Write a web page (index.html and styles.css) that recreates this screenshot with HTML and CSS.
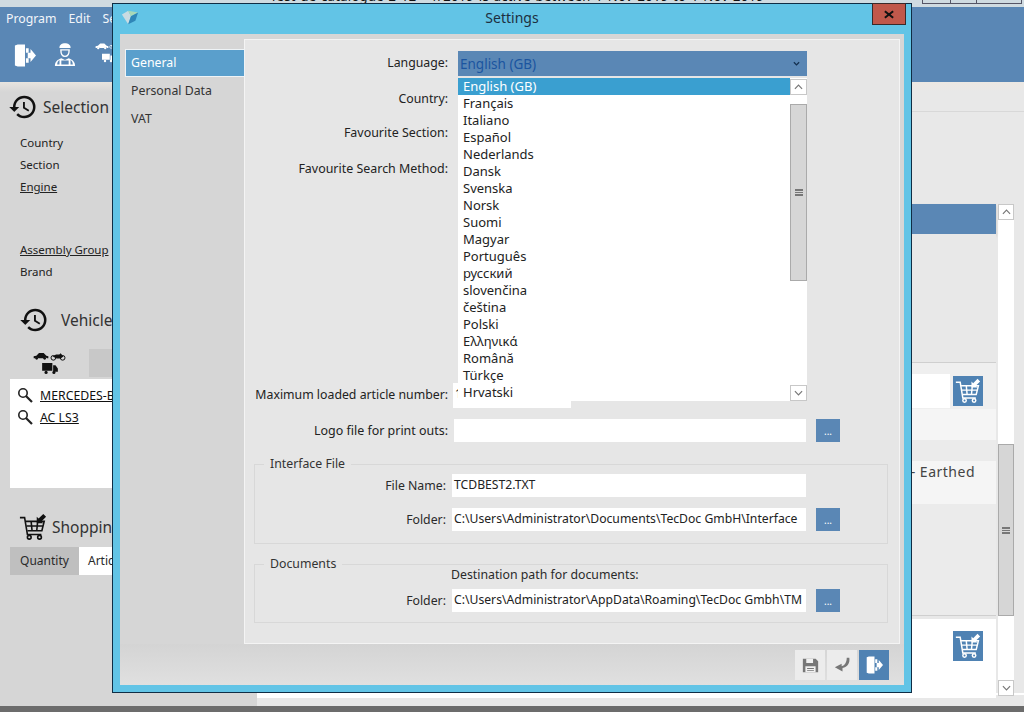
FILE: index.html
```html
<!DOCTYPE html>
<html lang="en">
<head>
<meta charset="utf-8">
<title>Settings</title>
<link rel="stylesheet" href="styles.css">
</head>
<body>
<svg class="sprite" width="0" height="0" aria-hidden="true">
  <symbol id="i-history" viewBox="0 0 24 24"><path d="M13 3a9 9 0 0 0-9 9H1l3.89 3.89.07.14L9 12H6c0-3.870 3.130-7 7-7s7 3.130 7 7-3.130 7-7 7c-1.930 0-3.680-.790-4.940-2.060l-1.420 1.420A8.954 8.954 0 0 0 13 21a9 9 0 0 0 0-18zm-1 5v5l4.280 2.540.720-1.210-3.500-2.080V8H12z"/></symbol>
  <symbol id="i-door" viewBox="0 0 24 28"><path d="M1 3l3-1h8v24H4l-3-1z"/><path d="M13 6h3v5h-3zM13 17h3v5h-3z"/><path d="M15 11h3V7l6 7-6 7v-4h-3z"/></symbol>
  <symbol id="i-search" viewBox="0 0 16 16"><circle cx="6" cy="6" r="4.200" fill="none" stroke="currentColor" stroke-width="1.600"/><path d="M9 9l6 6" stroke="currentColor" stroke-width="2.200" fill="none"/></symbol>
  <symbol id="i-cart" viewBox="0 0 30 30"><g fill="none" stroke="currentColor" stroke-width="1.700"><path d="M1 5h5l3 18h15"/><path d="M7 9h20l-2.500 10H9M8 14h18M13 9l1 10M20 9l-1 10"/><circle cx="11" cy="26" r="2"/><circle cx="22" cy="26" r="2"/></g><path d="M28 1l-5 5-2-2v7h7l-2-2 5-5z" fill="currentColor" transform="translate(-2 0)"/></symbol>
  <symbol id="i-save" viewBox="0 0 20 20"><path d="M1 2h15l3 3v13H1z" fill="currentColor"/><path d="M5 2h8v5H5zM4 11h12v7H4z" fill="#f0f0f0"/><path d="M6 13h8v1H6zM6 15.500h8v1H6z" fill="currentColor"/></symbol>
  <symbol id="i-back" viewBox="0 0 20 20"><path d="M18 1c1 6-2 11-8 12v4L1 12l8-4v3c4-1 6-5 6-10z" fill="currentColor"/></symbol>
  <symbol id="i-mech" viewBox="0 0 24 26"><path d="M6 6c-1-7 13-7 12 0z"/><path d="M7.500 8h9c0 5-1.500 7-4.500 7s-4.500-2-4.500-7z" fill="none" stroke="currentColor" stroke-width="1.500"/><path d="M1 25.500c0-5 3-7 7-8.500l4 2 4-2c4 1.500 7 3.500 7 8.500z"/><path d="M3.500 24c0-2.500 1-4 2.500-5v5zM20.500 24c0-2.500-1-4-2.500-5v5zM8 19.500h8V24H8z" fill="#5a87b5"/></symbol>
  <symbol id="i-car" viewBox="0 0 24 11"><path d="M1 9V6l4-1 4-4h7l4 4 3 1v3h-2a3 3 0 0 0-5 0H8a3 3 0 0 0-5 0z"/><circle cx="5.500" cy="9" r="2"/><circle cx="17.500" cy="9" r="2"/></symbol>
  <symbol id="i-bike" viewBox="0 0 24 12"><circle cx="5" cy="8" r="3.500" fill="none" stroke="currentColor" stroke-width="1.500"/><circle cx="19" cy="8" r="3.500" fill="none" stroke="currentColor" stroke-width="1.500"/><path d="M4 6l5-3h5l2-2 4 5-4 3h-6z"/></symbol>
  <symbol id="i-truck" viewBox="0 0 20 14"><path d="M0 0h13v10H0zM14 3h3l3 4v4h-6z"/><circle cx="5" cy="12" r="2"/><circle cx="15" cy="12" r="2"/></symbol>
  <symbol id="i-up" viewBox="0 0 10 6"><path d="M1 5l4-4 4 4" fill="none" stroke="currentColor" stroke-width="1.300"/></symbol>
  <symbol id="i-dn" viewBox="0 0 10 6"><path d="M1 1l4 4 4-4" fill="none" stroke="currentColor" stroke-width="1.300"/></symbol>
</svg>

<div class="app">
  <div class="os-title">
    <span class="os-title-text">Test de catalogue 2 12 - 1/2019 is active between 1 Nov 2019 to 1 Nov 2019</span>
    <div class="os-buttons"><i class="b1"></i><i class="b2"></i><i class="b3"></i></div>
  </div>
  <header class="topbar">
    <nav class="menu"><span>Program</span><span>Edit</span><span>Search</span></nav>
    <div class="tools">
      <svg class="tool-door"><use href="#i-door"/></svg>
      <svg class="tool-mech"><use href="#i-mech"/></svg>
      <div class="tool-veh">
        <div><svg class="v-car"><use href="#i-car"/></svg><svg class="v-bike"><use href="#i-bike"/></svg></div>
        <svg class="v-truck"><use href="#i-truck"/></svg>
      </div>
    </div>
  </header>
  <div class="workspace">
    <aside class="left">
      <div class="head head-sel"><svg class="hist"><use href="#i-history"/></svg><span>Selection Data</span></div>
      <ul class="crit">
        <li>Country</li>
        <li>Section</li>
        <li class="u">Engine</li>
        <li class="gap u">Assembly Group</li>
        <li>Brand</li>
      </ul>
      <div class="head head-veh"><svg class="hist"><use href="#i-history"/></svg><span>Vehicle History</span></div>
      <div class="tabs">
        <div class="tab-on">
          <div><svg class="t-car"><use href="#i-car"/></svg><svg class="t-bike"><use href="#i-bike"/></svg></div>
          <svg class="t-truck"><use href="#i-truck"/></svg>
        </div>
        <div class="tab-off"></div>
      </div>
      <div class="hist-box">
        <div class="hist-row"><svg class="mag"><use href="#i-search"/></svg><span>MERCEDES-BENZ</span></div>
        <div class="hist-row"><svg class="mag"><use href="#i-search"/></svg><span>AC LS3</span></div>
      </div>
      <div class="head head-cart"><svg class="cart"><use href="#i-cart"/></svg><span>Shopping Basket</span></div>
      <div class="cols"><div class="col-q">Quantity</div><div class="col-a">Article</div></div>
    </aside>
    <main class="right">
      <div class="strip"></div>
      <div class="results">
        <div class="res-col">
          <div class="res-head"></div>
          <div class="res-a"></div>
          <div class="res-b"><div class="white-row"></div><button class="cart-btn"><svg><use href="#i-cart"/></svg></button></div>
          <div class="res-c"></div>
          <div class="res-d"></div>
          <div class="res-e">- Earthed</div>
          <div class="res-f"></div>
          <div class="res-g"><button class="cart-btn"><svg><use href="#i-cart"/></svg></button></div>
        </div>
        <div class="vscroll page-scroll"><div class="arrow"><svg><use href="#i-up"/></svg></div><div class="v-track"><div class="v-thumb"><b></b></div></div><div class="arrow"><svg><use href="#i-dn"/></svg></div></div>
      </div>
    </main>
  </div>
  <div class="status"></div>
</div>

<section class="dialog">
  <div class="d-title">
    <svg class="d-logo" viewBox="0 0 20 20"><path d="M1 6l7-4 3 6-3 9z" fill="#c9dbe2"/><path d="M8 2l11 2-8 4z" fill="#a8d8b8"/><path d="M19 4l-3 9-8 4 3-9z" fill="#2f86b8"/></svg>
    <span>Settings</span>
    <div class="d-close"><svg viewBox="0 0 12 10"><path d="M1 1l10 8M11 1L1 9" stroke="#111" stroke-width="2.400" fill="none"/></svg></div>
  </div>
  <div class="d-body">
    <div class="d-main">
      <nav class="d-side">
        <div class="d-nav on">General</div>
        <div class="d-nav">Personal Data</div>
        <div class="d-nav">VAT</div>
      </nav>
      <div class="d-panel">
        <div class="row row-lang"><label>Language:</label><div class="sel"><span>English (GB)</span><svg viewBox="0 0 8 6"><path d="M1 1l3 3 3-3" stroke="#14304f" stroke-width="1.500" fill="none"/></svg></div></div>
        <div class="row row-country"><label>Country:</label></div>
        <div class="row row-sec"><label>Favourite Section:</label></div>
        <div class="row row-meth"><label>Favourite Search Method:</label></div>
        <div class="row row-max"><label>Maximum loaded article number:</label><div class="inp inp-max">1</div></div>
        <div class="row row-logo"><label>Logo file for print outs:</label><div class="inp inp-wide"></div><button class="dots">...</button></div>
        <fieldset class="grp grp-if">
          <legend>Interface File</legend>
          <div class="grow first"><label>File Name:</label><div class="inp inp-g">TCDBEST2.TXT</div></div>
          <div class="grow second"><label>Folder:</label><div class="inp inp-g">C:\Users\Administrator\Documents\TecDoc GmbH\Interface</div><button class="dots">...</button></div>
        </fieldset>
        <fieldset class="grp grp-doc">
          <legend>Documents</legend>
          <div class="dest">Destination path for documents:</div>
          <div class="grow third"><label>Folder:</label><div class="inp inp-g">C:\Users\Administrator\AppData\Roaming\TecDoc Gmbh\TM</div><button class="dots">...</button></div>
        </fieldset>
      </div>
    </div>
    <footer class="d-foot">
      <button class="fbtn"><svg class="f-save"><use href="#i-save"/></svg></button>
      <button class="fbtn"><svg class="f-back"><use href="#i-back"/></svg></button>
      <button class="fbtn exit"><svg class="f-door"><use href="#i-door"/></svg></button>
    </footer>
  </div>
  <div class="drop">
    <ul class="drop-list">
      <li class="cur">English (GB)</li><li>Français</li><li>Italiano</li><li>Español</li><li>Nederlands</li><li>Dansk</li><li>Svenska</li><li>Norsk</li><li>Suomi</li><li>Magyar</li><li>Português</li><li>русский</li><li>slovenčina</li><li>čeština</li><li>Polski</li><li>Ελληνικά</li><li>Română</li><li>Türkçe</li><li>Hrvatski</li>
    </ul>
    <div class="vscroll drop-scroll"><div class="arrow"><svg><use href="#i-up"/></svg></div><div class="v-track"><div class="v-thumb"><b></b></div></div><div class="arrow"><svg><use href="#i-dn"/></svg></div></div>
  </div>
</section>
</body>
</html>
```
FILE: styles.css
```css
* { box-sizing: border-box; }
html, body { margin: 0; padding: 0; width: 1024px; height: 712px; overflow: hidden; }
body { font-family: "Noto Sans", sans-serif; font-size: 12.300px; color: #2a2a2a; background: #d6d6d6; position: relative; }
.sprite { position: absolute; }
svg { fill: currentColor; display: block; }
ul { list-style: none; margin: 0; padding: 0; }
button { border: 0; padding: 0; font: inherit; }

.app { height: 712px; display: flex; flex-direction: column; }
.os-title { height: 7px; background: #cfdbe1; position: relative; overflow: hidden; flex: none; display: flex; justify-content: flex-end; }
.os-title-text { position: absolute; left: 270px; top: -13px; font-size: 13px; color: #111; white-space: nowrap; word-spacing: 1px; letter-spacing: .3px; }
.os-buttons { display: flex; margin-right: 2px; height: 4px; }
.os-buttons i { display: block; border: 1px solid #556; border-top: 0; background: #cfdbe1; height: 4px; margin-left: -1px; }
.os-buttons .b1 { width: 29px; } .os-buttons .b2 { width: 27px; } .os-buttons .b3 { width: 46px; }

.topbar { height: 75px; background: #5a87b5; color: #fff; flex: none; }
.menu { display: flex; gap: 12px; padding: 4px 0 0 6px; font-size: 12.300px; line-height: 16px; color: #f2f6fa; }
.tools { display: flex; padding: 15px 0 0 14px; color: #fff; }
.tool-door { width: 22px; height: 27px; }
.tool-mech { width: 22px; height: 25px; margin-left: 18px; }
.tool-veh { margin-left: 19px; width: 24px; }
.tool-veh > div { display: flex; }
.v-car { width: 14px; height: 8px; } .v-bike { width: 10px; height: 8px; }
.v-truck { width: 12px; height: 10px; margin: 3px 0 0 7px; }

.workspace { flex: 1; display: flex; min-height: 0; }
.left { width: 257px; flex: none; background: linear-gradient(#e8e4df 0, #d6d6d6 10px); padding: 0 0 0 10px; }
.head { display: flex; align-items: center; white-space: nowrap; font-size: 15.500px; color: #333; }
.head-sel { padding-top: 11px; height: 39px; }
.hist { width: 30px; height: 30px; color: #111; margin-left: -2px; }
.head-sel span { margin-left: 5px; }
.crit { padding: 0 0 0 10px; margin-top: 11px; color: #222; }
.crit li { height: 22px; line-height: 22px; font-size: 11.500px; }
.crit .u { text-decoration: underline; }
.crit .gap { margin-top: 41px; }
.head-veh { margin-top: 22px; height: 30px; padding-left: 11px; }
.head-veh span { margin-left: 12px; }
.tabs { display: flex; height: 28px; margin-top: 14px; }
.tab-on { width: 79px; background: #d6d6d6; color: #111; padding: 3px 0 0 23px; }
.tab-on > div { display: flex; gap: 1px; }
.t-car { width: 16px; height: 8px; } .t-bike { width: 16px; height: 9px; }
.t-truck { width: 16px; height: 11px; margin: 2px 0 0 9px; }
.tab-off { flex: 1; background: #c8c8c8; }
.hist-box { background: #fff; height: 109px; margin-top: 2px; padding: 5px 0 0 7px; }
.hist-row { display: flex; align-items: center; height: 22px; font-size: 12.300px; color: #111; white-space: nowrap; }
.hist-row span { text-decoration: underline; margin-left: 7px; }
.mag { width: 16px; height: 16px; color: #222; }
.head-cart { margin-top: 23px; height: 32px; }
.cart { width: 28px; height: 28px; color: #111; margin-left: 9px; }
.head-cart span { margin-left: 5px; }
.cols { display: flex; height: 28px; margin-top: 4px; line-height: 28px; font-size: 12px; }
.col-q { width: 69px; background: #bfbfbf; text-align: center; }
.col-a { flex: 1; background: #fff; padding-left: 9px; }

.right { flex: 1; display: flex; flex-direction: column; background: #e8e8e8; min-width: 0; }
.strip { height: 30px; background: linear-gradient(#ece8e3 0, #e8e8e8 10px); border-bottom: 1px solid #d8d8d8; flex: none; }
.results { flex: 1; display: flex; padding: 92px 10px 10px 0; gap: 2px; min-height: 0; background: linear-gradient(#fff, #fff) 46px calc(100% - 11px) / 100% 2px no-repeat; }
.res-col { flex: 1; min-width: 0; position: relative; }
.res-head { height: 30px; background: #5a87b5; box-shadow: 0 2px 3px #c9c2bc; }
.res-a { height: 129px; background: #e8e8e8; border-bottom: 1px solid #cfcfcf; }
.res-b { height: 46px; background: #efefef; padding-top: 11px; position: relative; }
.white-row { background: #fff; height: 34px; width: 693px; }
.res-b .cart-btn { top: 13px; }
.cart-btn { position: absolute; right: 13px; width: 30px; height: 30px; background: #4f82b3; color: #fff; padding: 2px; }
.cart-btn svg { width: 26px; height: 26px; }
.res-c { height: 31px; background: #f5f5f5; }
.res-d { height: 21px; background: #ebebeb; }
.res-e { height: 43px; background: #f5f5f5; text-align: right; padding: 2px 21px 0 0; font-size: 14px; line-height: 18px; color: #444; letter-spacing: .5px; }
.res-f { height: 112px; background: #ebebeb; border-bottom: 1px solid #cfcfcf; }
.res-g { height: 79px; margin-top: 3px; background: #fff; position: relative; }
.res-g .cart-btn { top: 12px; }

.vscroll { display: flex; flex-direction: column; background: #fff; width: 16px; flex: none; }
.arrow { height: 16px; flex: none; background: #fff; border: 1px solid #c8c8c8; color: #777; display: flex; align-items: center; justify-content: center; }
.arrow svg { width: 9px; height: 6px; }
.v-track { flex: 1; position: relative; min-height: 0; }
.v-thumb { position: absolute; left: 0; right: 0; background: #d6d6d6; border: 1px solid #aaa; display: flex; align-items: center; justify-content: center; }
.v-thumb b { display: block; width: 8px; height: 7px; border-top: 2px solid #777; border-bottom: 2px solid #777; position: relative; }
.v-thumb b::after { content: ""; position: absolute; left: 0; right: 0; top: 1px; height: 1px; background: #777; }
.page-scroll .v-thumb { top: 224px; height: 172px; }
.drop-scroll { padding-top: 1px; }
.drop-scroll .v-thumb { top: 9px; height: 177px; }

.status { height: 6px; background: #6c6c6c; flex: none; }

/* dialog window */
.dialog { position: absolute; left: 112px; top: 3px; width: 800px; height: 690px; background: #62c4e6; border: 1px solid #0f2d45; display: flex; flex-direction: column; }
.d-title { height: 30px; flex: none; position: relative; text-align: center; font-size: 14px; line-height: 28px; color: #1d2f40; }
.d-logo { position: absolute; left: 8px; top: 5px; width: 18px; height: 18px; }
.d-close { position: absolute; right: 5px; top: -1px; width: 34px; height: 22px; background: #c0584b; border: 1px solid #3a2a2a; display: flex; align-items: center; justify-content: center; }
.d-close svg { width: 10px; height: 9px; }
.d-body { flex: 1; margin: 0 7px 7px; background: #d6d6d6; display: flex; flex-direction: column; min-height: 0; }
.d-main { flex: 1; display: flex; padding-top: 5px; min-height: 0; }
.d-side { width: 124px; flex: none; padding: 10px 0 0 5px; color: #333; }
.d-nav { height: 28px; line-height: 28px; padding-left: 6px; width: 120px; position: relative; z-index: 1; }
.d-nav.on { background: #5a9fcc; border: 1px solid #eef3f6; color: #fff; padding-left: 5px; line-height: 25px; }
.d-panel { flex: 1; height: 605px; margin-right: 4px; background: #e6e6e6; border: 1px solid #f4f4f4; padding-top: 11px; }
.row { display: flex; align-items: center; height: 25px; }
.row label { width: 203px; text-align: right; flex: none; white-space: nowrap; color: #222; }
.row-lang label, .row-max label { padding-bottom: 2px; }
.row-logo label, .row-sec label, .row-meth label { font-size: 12.450px; }
.sel { width: 349px; height: 25px; margin-left: 10px; background: #5a87b5; color: #1b55a0; display: flex; align-items: center; justify-content: space-between; padding: 0 7px 0 2px; font-size: 13.500px; }
.sel svg { width: 7px; height: 6px; }
.row-country { margin-top: 10px; }
.row-sec { margin-top: 9px; }
.row-meth { margin-top: 11px; }
.row-max { margin-top: 202px; }
.row-logo { margin-top: 11px; height: 23px; }
.inp { background: #fff; height: 23px; line-height: 22px; overflow: hidden; white-space: nowrap; color: #222; padding-left: 2px; font-size: 12.200px; }
.inp-max { width: 118px; height: 25px; margin-left: 5px; }
.inp-wide { width: 352px; margin-left: 6px; }
.dots { width: 24px; height: 23px; margin-left: 10px; background: #5a87b5; color: #fff; font-size: 10px; line-height: 24px; text-align: center; }
.grp { margin: 13px 0 0 9px; width: 634px; padding: 0; border: 1px solid #d8d8d8; display: block; }
.grp legend { margin-left: 9px; padding: 0 6px; font-size: 12.300px; line-height: 18px; color: #333; }
.grow { display: flex; align-items: center; height: 23px; }
.grow label { width: 191px; text-align: right; flex: none; }
.inp-g { width: 354px; margin-left: 6px; }
.first { margin-top: 1px; }
.second { margin-top: 11px; margin-bottom: 12px; }
.grp-doc { margin-top: 11px; }
.dest { margin: -7px 0 0 196px; height: 18px; line-height: 18px; white-space: nowrap; }
.third { margin-top: 5px; margin-bottom: 10px; }
.d-foot { height: 41px; flex: none; display: flex; justify-content: flex-end; gap: 2px; padding: 6px 15px 5px 0; background: linear-gradient(#d4d4d4, #e0e0e0); }
.fbtn { width: 30px; height: 30px; background: #ececec; color: #777; display: flex; align-items: center; justify-content: center; }
.fbtn.exit { background: #4f82b3; color: #fff; }
.f-save, .f-back { width: 17px; height: 17px; }
.f-door { width: 17px; height: 20px; }

.drop { position: absolute; left: 345px; top: 74px; width: 349px; height: 323px; background: #fff; display: flex; }
.drop-list { flex: 1; font-size: 13px; color: #222; }
.drop-list li { height: 17px; line-height: 17px; padding-left: 5px; white-space: nowrap; }
.drop-list .cur { background: #3a9fd0; color: #fff; }
.drop-scroll { width: 17px; }
```
